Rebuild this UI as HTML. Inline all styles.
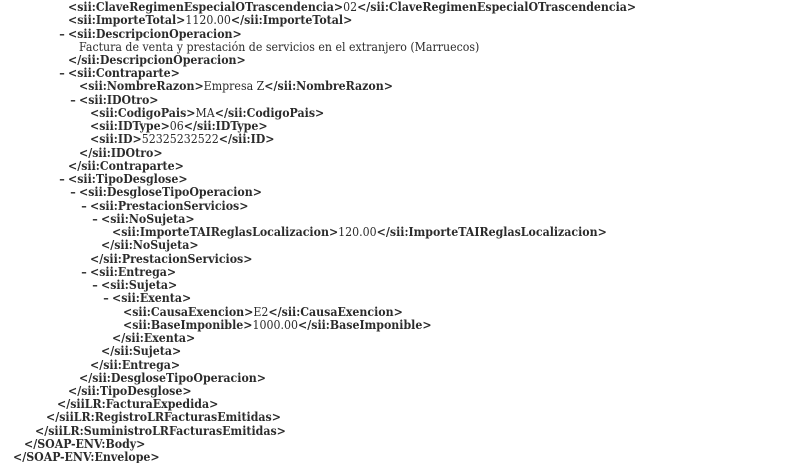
<!DOCTYPE html>
<html><head><meta charset="utf-8"><style>
html,body{margin:0;padding:0;background:#fff;width:800px;height:463px;overflow:hidden}
body{font-family:"DejaVu Serif","Liberation Serif",serif;font-size:12.5px;color:#2b2b2b;position:relative}
.l{position:absolute;white-space:nowrap;line-height:13px;height:13px;transform:scaleX(0.88);transform-origin:0 50%}
.m{position:absolute;left:-10px;font-weight:bold}
</style></head><body>
<div id="c"></div>
<script>
var L=[
[5,0,'<b>&lt;sii:ClaveRegimenEspecialOTrascendencia&gt;</b>02<b>&lt;/sii:ClaveRegimenEspecialOTrascendencia&gt;</b>'],
[5,0,'<b>&lt;sii:ImporteTotal&gt;</b>1120.00<b>&lt;/sii:ImporteTotal&gt;</b>'],
[5,1,'<b>&lt;sii:DescripcionOperacion&gt;</b>'],
[6,0,'Factura de venta y prestación de servicios en el extranjero (Marruecos)'],
[5,0,'<b>&lt;/sii:DescripcionOperacion&gt;</b>'],
[5,1,'<b>&lt;sii:Contraparte&gt;</b>'],
[6,0,'<b>&lt;sii:NombreRazon&gt;</b>Empresa Z<b>&lt;/sii:NombreRazon&gt;</b>'],
[6,1,'<b>&lt;sii:IDOtro&gt;</b>'],
[7,0,'<b>&lt;sii:CodigoPais&gt;</b>MA<b>&lt;/sii:CodigoPais&gt;</b>'],
[7,0,'<b>&lt;sii:IDType&gt;</b>06<b>&lt;/sii:IDType&gt;</b>'],
[7,0,'<b>&lt;sii:ID&gt;</b>52325232522<b>&lt;/sii:ID&gt;</b>'],
[6,0,'<b>&lt;/sii:IDOtro&gt;</b>'],
[5,0,'<b>&lt;/sii:Contraparte&gt;</b>'],
[5,1,'<b>&lt;sii:TipoDesglose&gt;</b>'],
[6,1,'<b>&lt;sii:DesgloseTipoOperacion&gt;</b>'],
[7,1,'<b>&lt;sii:PrestacionServicios&gt;</b>'],
[8,1,'<b>&lt;sii:NoSujeta&gt;</b>'],
[9,0,'<b>&lt;sii:ImporteTAIReglasLocalizacion&gt;</b>120.00<b>&lt;/sii:ImporteTAIReglasLocalizacion&gt;</b>'],
[8,0,'<b>&lt;/sii:NoSujeta&gt;</b>'],
[7,0,'<b>&lt;/sii:PrestacionServicios&gt;</b>'],
[7,1,'<b>&lt;sii:Entrega&gt;</b>'],
[8,1,'<b>&lt;sii:Sujeta&gt;</b>'],
[9,1,'<b>&lt;sii:Exenta&gt;</b>'],
[10,0,'<b>&lt;sii:CausaExencion&gt;</b>E2<b>&lt;/sii:CausaExencion&gt;</b>'],
[10,0,'<b>&lt;sii:BaseImponible&gt;</b>1000.00<b>&lt;/sii:BaseImponible&gt;</b>'],
[9,0,'<b>&lt;/sii:Exenta&gt;</b>'],
[8,0,'<b>&lt;/sii:Sujeta&gt;</b>'],
[7,0,'<b>&lt;/sii:Entrega&gt;</b>'],
[6,0,'<b>&lt;/sii:DesgloseTipoOperacion&gt;</b>'],
[5,0,'<b>&lt;/sii:TipoDesglose&gt;</b>'],
[4,0,'<b>&lt;/siiLR:FacturaExpedida&gt;</b>'],
[3,0,'<b>&lt;/siiLR:RegistroLRFacturasEmitidas&gt;</b>'],
[2,0,'<b>&lt;/siiLR:SuministroLRFacturasEmitidas&gt;</b>'],
[1,0,'<b>&lt;/SOAP-ENV:Body&gt;</b>'],
[0,0,'<b>&lt;/SOAP-ENV:Envelope&gt;</b>']
];
var h='';
for(var i=0;i<L.length;i++){
 var x=13+L[i][0]*11, y=i*13.24;
 h+='<div class="l" style="left:'+x+'px;top:'+y.toFixed(1)+'px">'+(L[i][1]?'<span class="m">&#8211;</span>':'')+L[i][2]+'</div>';
}
document.getElementById('c').innerHTML=h;
</script>
</body></html>
